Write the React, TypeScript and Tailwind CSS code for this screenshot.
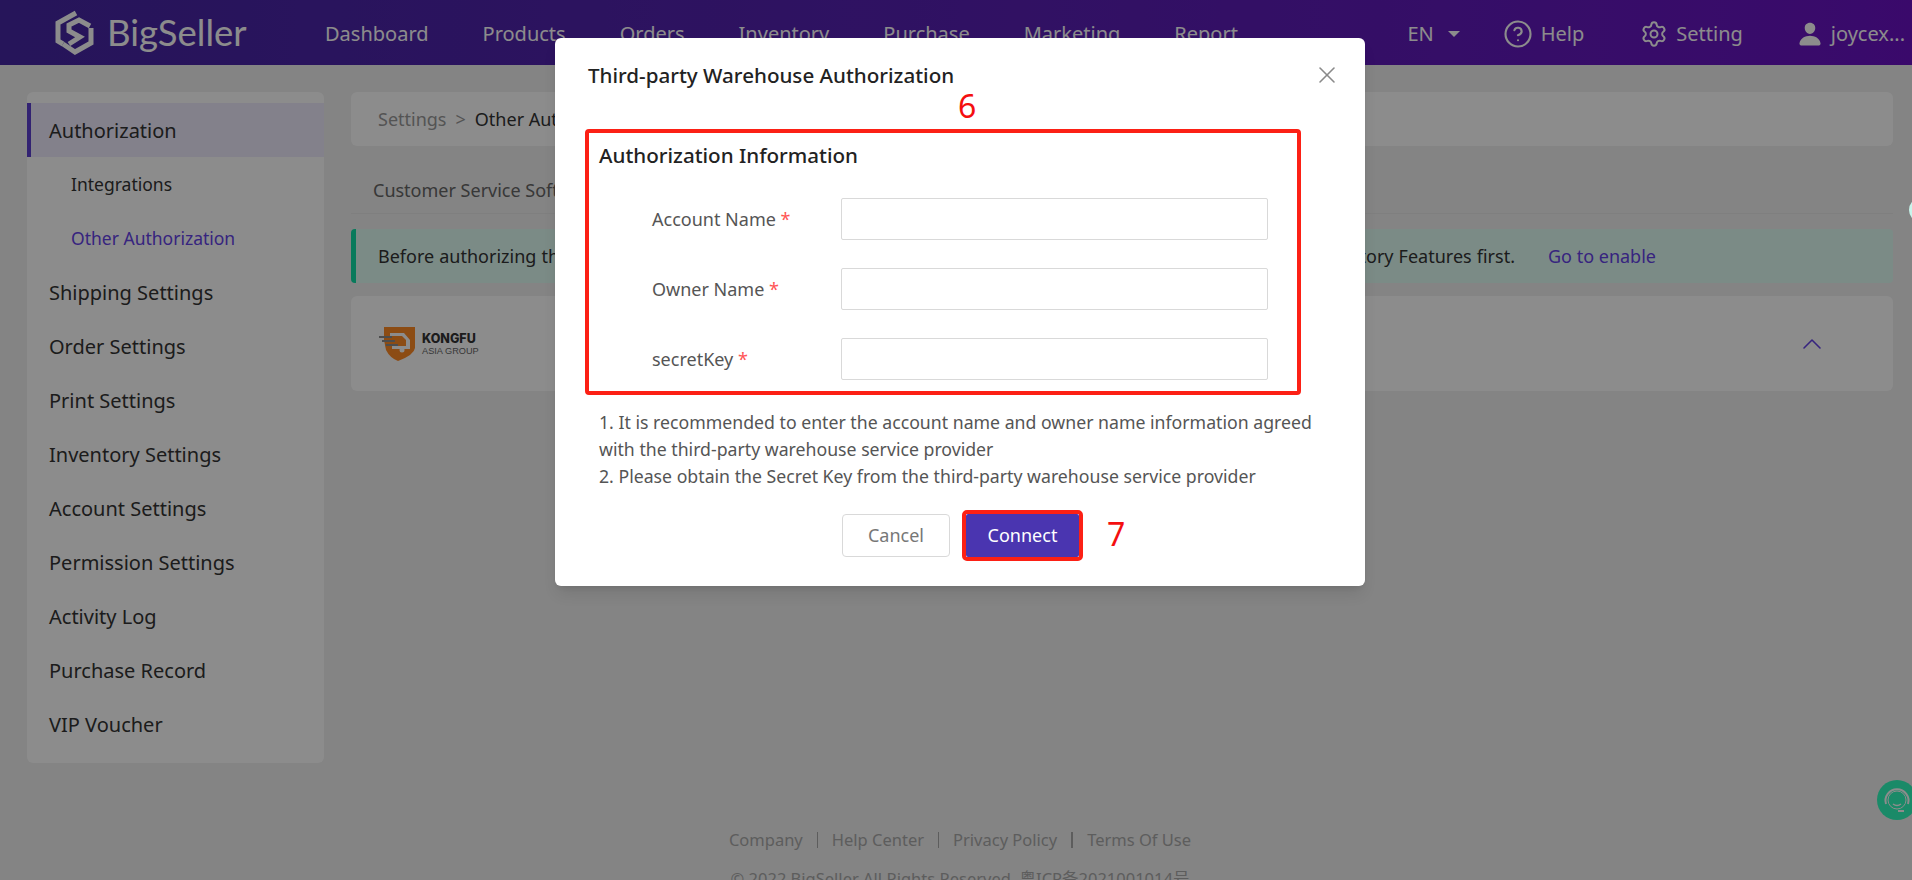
import React from 'react';
import { CircleHelp, Settings, X, ChevronUp } from 'lucide-react';
import { IoPerson } from 'react-icons/io5';

const navItems = ['Dashboard', 'Products', 'Orders', 'Inventory', 'Purchase', 'Marketing', 'Report'];

const sideItems = [
  { label: 'Authorization', kind: 'active' },
  { label: 'Integrations', kind: 'sub' },
  { label: 'Other Authorization', kind: 'current' },
  { label: 'Shipping Settings', kind: 'main' },
  { label: 'Order Settings', kind: 'main' },
  { label: 'Print Settings', kind: 'main' },
  { label: 'Inventory Settings', kind: 'main' },
  { label: 'Account Settings', kind: 'main' },
  { label: 'Permission Settings', kind: 'main' },
  { label: 'Activity Log', kind: 'main' },
  { label: 'Purchase Record', kind: 'main' },
  { label: 'VIP Voucher', kind: 'main' },
];

const fields = ['Account Name', 'Owner Name', 'secretKey'];

function Logo() {
  return (
    <svg width="40" height="46" viewBox="0 0 40 46" fill="none" stroke="currentColor" strokeWidth="5">
      <path d="M21 3 L3 13 V31 L8 34" />
      <path d="M35 16 L24 10 L14 15 V21 L25 27 L14 34" />
      <path d="M8 34 L20 42 L36 33 V18" />
    </svg>
  );
}

function KongfuLogo() {
  return (
    <div className="flex items-center gap-[6px]">
      <svg width="38" height="36" viewBox="0 0 38 36">
        <path d="M6 1 H37 V22 Q36 29 20 35 Q12 32 8 24 L6 14 Z" fill="#ff8a25" />
        <path d="M1 11 H14 M4 15 H17 M8 19 H20" stroke="#8c8c8c" strokeWidth="2" />
        <path d="M12 7 H26 L32 14 V23 H14 V20 H28 V14 L24 10 H12 Z" fill="#fff" />
        <circle cx="24" cy="24" r="2.5" fill="#fff" />
      </svg>
      <div className="flex flex-col">
        <span className="text-[12.5px] leading-[15px] font-extrabold text-[#333] font-['Inter',sans-serif]">KONGFU</span>
        <span className="text-[9.2px] leading-[11px] text-[#666] font-['Liberation_Sans',sans-serif]">ASIA GROUP</span>
      </div>
    </div>
  );
}

function Page() {
  return (
    <div className="flex h-[880px] flex-col bg-[#f0f0f0]">
      {/* Header */}
      <header className="flex h-[65px] shrink-0 items-center bg-gradient-to-r from-[#4527a4] to-[#6a12c4] text-white">
        <div className="ml-[55px] flex w-[270px] items-center gap-[12px]">
          <Logo />
          <span className="text-[36.5px] leading-none font-['Lato',sans-serif]">BigSeller</span>
        </div>
        <nav className="flex gap-[54px] pt-[2px] text-[20px]">
          {navItems.map(item => (
            <span key={item}>{item}</span>
          ))}
        </nav>
        <div className="ml-auto flex items-center pt-[2px] pr-[7px] text-[20px]">
          <span>EN</span>
          <span className="ml-[14px] h-0 w-0 border-x-[6px] border-t-[6px] border-x-transparent border-t-white" />
          <CircleHelp className="ml-[43px]" size={30} strokeWidth={1.7} />
          <span className="ml-[8px]">Help</span>
          <Settings className="ml-[56px]" size={28} strokeWidth={1.7} />
          <span className="ml-[8px]">Setting</span>
          <IoPerson className="ml-[54px]" size={26} />
          <span className="ml-[8px]">joycex...</span>
        </div>
      </header>

      {/* Body */}
      <div className="flex flex-1 gap-[27px] pt-[27px] pr-[19px] pl-[27px]">
        <aside className="h-[671px] w-[297px] shrink-0 rounded-md bg-white py-[11px]">
          {sideItems.map(({ label, kind }) => {
            if (kind === 'active') {
              return (
                <div key={label} className="flex h-[54px] items-center border-l-4 border-[#5b3fd0] bg-[#eeebfd] pt-[2px] pl-[18px] text-[20px] text-[#333]">
                  {label}
                </div>
              );
            }
            if (kind === 'sub' || kind === 'current') {
              return (
                <div key={label} className={`flex h-[54px] items-center pl-[44px] text-[17.5px] ${kind === 'current' ? 'text-[#6442e7]' : 'text-[#333]'}`}>
                  {label}
                </div>
              );
            }
            return (
              <div key={label} className="flex h-[54px] items-center pt-[2px] pl-[22px] text-[20px] text-[#333]">
                {label}
              </div>
            );
          })}
        </aside>

        <main className="flex min-w-0 flex-1 flex-col">
          <div className="flex h-[54px] items-center rounded-md bg-white pl-[27px] text-[18px]">
            <span className="text-[#999]">Settings</span>
            <span className="mx-[9px] text-[#999]">&gt;</span>
            <span className="text-[#333]">Other Authorization</span>
          </div>
          <div className="flex h-[68px] items-center border-b border-[#e8e8e8] pt-[22px] pl-[22px] text-[18px] text-[#666]">
            Customer Service Software
          </div>
          <div className="mt-[15px] flex h-[54px] items-center rounded-sm border-l-[5px] border-[#0fdea7] bg-[#e1fdf5] pl-[22px] text-[18px] text-[#333]">
            <span className="w-[1137px] whitespace-nowrap [text-align-last:justify]">
              Before authorizing the third-party warehouse service provider, you need to enable the Third-party Warehouse Inventory Features first.
            </span>
            <span className="ml-[33px] text-[#6442e7]">Go to enable</span>
          </div>
          <div className="mt-[13px] flex h-[95px] items-center justify-between rounded-md bg-white pr-[65px] pl-[27px]">
            <KongfuLogo />
            <ChevronUp className="text-[#6442e7]" size={32} strokeWidth={1.2} />
          </div>
        </main>
      </div>

      {/* Footer */}
      <footer className="ml-[8px] flex h-[76px] shrink-0 flex-col items-center pt-[24px] text-[16.5px] text-[#aaa]">
        <div className="flex h-[24px] items-center">
          <span>Company</span>
          <span className="mx-[14px] h-[16px] w-px bg-[#aaa]" />
          <span>Help Center</span>
          <span className="mx-[14px] h-[16px] w-px bg-[#aaa]" />
          <span>Privacy Policy</span>
          <span className="mx-[14px] h-[16px] w-[2px] bg-[#aaa]" />
          <span>Terms Of Use</span>
        </div>
        <div className="mt-[15px] whitespace-nowrap font-['Noto_Sans','Noto_Sans_CJK_SC',sans-serif]">© 2022 BigSeller All Rights Reserved. 粤ICP备2021001014号</div>
      </footer>
    </div>
  );
}

function AuthModal() {
  return (
    <div className="absolute top-[38px] left-[555px] flex h-[548px] w-[810px] flex-col rounded-md bg-white pt-[22px] pl-[30px] shadow-lg">
      <div className="relative flex h-[30px] items-center pl-[3px] text-[20.6px] font-medium text-[#222]">
        Third-party Warehouse Authorization
        <X className="absolute top-[1px] right-[24px] text-[#8a8a8a]" size={28} strokeWidth={1.3} />
      </div>
      <div className="flex h-[39px] items-start pl-[373px] text-[32px] leading-none text-[#f40f0f]">6</div>
      <section className="h-[266px] w-[716px] rounded-[4px] border-[4px] border-[#fc2015] pt-[7px] pl-[10px]">
        <h2 className="flex h-[30px] items-center text-[20.6px] font-medium text-[#222]">Authorization Information</h2>
        <div className="mt-[28px] flex flex-col gap-[28px]">
          {fields.map(f => (
            <div key={f} className="flex h-[42px] items-center">
              <label className="w-[242px] pl-[53px] text-[18px] text-[#555]">
                {f} <span className="text-[#f55]">*</span>
              </label>
              <input className="h-[42px] w-[427px] rounded-[2px] border border-[#d9d9d9] bg-white" />
            </div>
          ))}
        </div>
      </section>
      <div className="mt-[14px] w-[735px] pl-[14px] text-[17.7px] leading-[27px] text-[#555]">
        <p>1. It is recommended to enter the account name and owner name information agreed with the third-party warehouse service provider</p>
        <p>2. Please obtain the Secret Key from the third-party warehouse service provider</p>
      </div>
      <div className="mt-[20px] flex items-center pl-[257px]">
        <button className="h-[43px] w-[108px] rounded-[4px] border border-[#d9d9d9] bg-white text-[18px] text-[#777]">Cancel</button>
        <div className="ml-[12px] rounded-[5px] border-[4px] border-[#fc2015]">
          <button className="flex h-[43px] w-[113px] items-center justify-center rounded-[2px] bg-[#4a35b0] text-[18px] text-white">Connect</button>
        </div>
        <span className="mb-[4px] ml-[24px] text-[32px] leading-none text-[#f40f0f]">7</span>
      </div>
    </div>
  );
}

export default function App() {
  return (
    <div className="relative h-[880px] overflow-hidden font-['Noto_Sans',sans-serif]">
      <Page />
      {/* Chat button */}
      <div className="absolute top-[780px] left-[1877px] flex h-[40px] w-[40px] items-center justify-center rounded-full bg-[#30fbbd]">
        <svg width="30" height="30" viewBox="0 0 30 30" fill="none" stroke="#fff" strokeWidth="2">
          <path d="M4 19 A11.5 11.5 0 1 1 26 19" />
          <circle cx="15" cy="15" r="9" strokeWidth="1" />
          <path d="M11 19 Q15 22 19 19" strokeWidth="1.5" />
          <path d="M22 26 H16" strokeWidth="2" />
        </svg>
      </div>
      {/* Mask */}
      <div className="absolute inset-0 bg-black/45" />
      <div className="absolute top-[197px] left-[1909px] h-[26px] w-[26px] rounded-full bg-[#c8f5ec]" />
      <AuthModal />
    </div>
  );
}
